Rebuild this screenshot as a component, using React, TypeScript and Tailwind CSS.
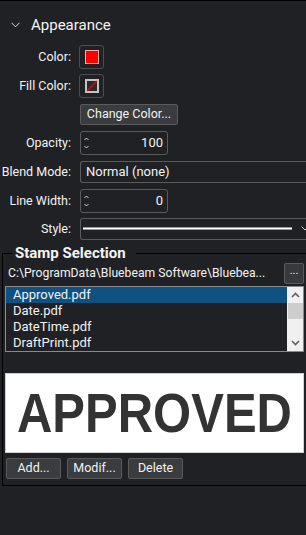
import React from "react";

const font = { fontFamily: "Roboto, 'Noto Sans', sans-serif" };

function Label({ children }: { children: React.ReactNode }) {
  return (
    <div className="flex w-[71px] shrink-0 justify-end whitespace-nowrap text-[12.5px] leading-[16px] text-[#f2f2f2]">
      {children}
    </div>
  );
}

function Spin({ value }: { value: string }) {
  return (
    <div className="ml-[9px] flex h-[24px] w-[88px] items-center rounded-[3px] border border-[#5a5a5a] pl-[3px] pr-[4px]">
      <div className="flex flex-col items-center justify-center gap-[4px]">
        <svg width="5" height="4" viewBox="0 0 5 4"><path d="M0.5 3 L2.5 1 L4.5 3" stroke="#cfcfcf" strokeWidth="1" fill="none" /></svg>
        <svg width="5" height="4" viewBox="0 0 5 4"><path d="M0.5 1 L2.5 3 L4.5 1" stroke="#cfcfcf" strokeWidth="1" fill="none" /></svg>
      </div>
      <div className="flex-1 text-right text-[13px] text-[#f2f2f2]">{value}</div>
    </div>
  );
}

function Btn({ children, w }: { children: React.ReactNode; w: string }) {
  return (
    <div className={`${w} flex h-[21px] items-center justify-center rounded-[2px] border border-[#5a5a5a] bg-[#3b3c3f] text-[12.5px] text-[#f2f2f2]`}>
      {children}
    </div>
  );
}

export default function App() {
  return (
    <div style={font} className="h-[535px] w-[306px] overflow-hidden border-t border-black bg-[#202124] text-[#f2f2f2]">
      {/* Header */}
      <div className="mt-[15px] flex h-[18px] items-center">
        <svg className="ml-[11px]" width="9" height="6" viewBox="0 0 9 6">
          <path d="M0.5 0.8 L4.5 4.8 L8.5 0.8" stroke="#e0e0e0" strokeWidth="1" fill="none" />
        </svg>
        <span className="ml-[11px] text-[15px] leading-[18px] text-[#f4f4f4]">Appearance</span>
      </div>

      {/* Color */}
      <div className="mt-[11px] flex items-center">
        <Label>Color:</Label>
        <div className="ml-[8px] flex h-[24px] w-[25px] items-center justify-center rounded-[3px] border border-[#4d4d4d]">
          <div className="h-[14px] w-[14px] border border-[#e6b0b0] bg-[#ff0000]" />
        </div>
      </div>

      {/* Fill color */}
      <div className="mt-[5px] flex items-center">
        <Label>Fill Color:</Label>
        <div className="ml-[8px] flex h-[24px] w-[25px] items-center justify-center rounded-[3px] border border-[#4d4d4d]">
          <svg width="14" height="14" viewBox="0 0 14 14">
            <rect x="1" y="1" width="12" height="12" fill="#2a2a2a" stroke="#c4c4c4" strokeWidth="2" />
            <path d="M2 12 L12 2" stroke="#ff0000" strokeWidth="1.3" />
          </svg>
        </div>
      </div>

      {/* Change color */}
      <div className="mt-[6px] flex">
        <div className="ml-[80px]">
          <Btn w="w-[98px]">Change Color...</Btn>
        </div>
      </div>

      {/* Opacity */}
      <div className="mt-[6px] flex items-center">
        <Label>Opacity:</Label>
        <Spin value="100" />
      </div>

      {/* Blend mode */}
      <div className="mt-[6px] flex items-center">
        <Label>Blend Mode:</Label>
        <div className="ml-[9px] flex h-[22px] flex-1 items-center rounded-l-[3px] border border-r-0 border-[#5a5a5a] pl-[5px] text-[13px] text-[#f2f2f2]">
          Normal (none)
        </div>
      </div>

      {/* Line width */}
      <div className="mt-[6px] flex items-center">
        <Label>Line Width:</Label>
        <Spin value="0" />
      </div>

      {/* Style */}
      <div className="mt-[5px] flex items-center">
        <Label>Style:</Label>
        <div className="ml-[9px] flex h-[22px] flex-1 items-center rounded-l-[3px] border border-r-0 border-[#5a5a5a] pb-[1px] pl-[2px]">
          <div className="h-[3px] w-[209px] border-y border-[#9a9a9a] bg-white" />
          <svg className="ml-[9px]" width="8" height="5" viewBox="0 0 8 5">
            <path d="M0.5 0.5 L4 4 L7.5 0.5" stroke="#cfcfcf" strokeWidth="1" fill="none" />
          </svg>
        </div>
      </div>

      {/* Stamp Selection group */}
      <fieldset className="ml-[2px] mt-[4px] w-[304px] border border-r-0 border-black pb-[6px]">
        <legend className="ml-[9px] pl-[3px] pr-[10px] text-[15px] font-bold leading-[18px] text-[#f4f4f4]">
          Stamp Selection
        </legend>

        <div className="flex h-[22px] items-center">
          <span className="ml-[5px] whitespace-nowrap text-[12.2px] text-[#f2f2f2]">
            C:\ProgramData\Bluebeam Software\Bluebea...
          </span>
          <div className="ml-auto mr-[2px] flex h-[21px] w-[20px] items-center justify-center rounded-[2px] border border-[#5a5a5a] bg-[#38393c] pb-[3px] text-[11px]">
            ...
          </div>
        </div>

        {/* List */}
        <div className="ml-[2px] mt-[2px] flex h-[66px] w-[299px] border border-[#8a8a8a]">
          <div className="flex-1 text-[13px] leading-[16px] text-[#f2f2f2]">
            <div className="h-[16px] bg-[#0f5180] pl-[7px]">Approved.pdf</div>
            <div className="h-[16px] pl-[7px]">Date.pdf</div>
            <div className="h-[16px] pl-[7px]">DateTime.pdf</div>
            <div className="h-[16px] pl-[7px]">DraftPrint.pdf</div>
          </div>
          <div className="flex w-[16px] flex-col items-center bg-[#f0f0f0]">
            <div className="flex h-[16px] items-center justify-center">
              <svg width="9" height="6" viewBox="0 0 9 6"><path d="M1 5 L4.5 1.5 L8 5" stroke="#606060" strokeWidth="1.6" fill="none" /></svg>
            </div>
            <div className="h-[16px] w-[15px] bg-[#cdcdcd]" />
            <div className="flex-1" />
            <div className="flex h-[16px] items-center justify-center">
              <svg width="9" height="6" viewBox="0 0 9 6"><path d="M1 1 L4.5 4.5 L8 1" stroke="#606060" strokeWidth="1.6" fill="none" /></svg>
            </div>
          </div>
        </div>

        {/* Preview */}
        <div className="ml-[2px] mt-[21px] flex h-[80px] w-[299px] items-center justify-center overflow-hidden border border-[#d0d0d0] bg-white">
          <span
            style={{ fontFamily: "'Liberation Sans', Arial, sans-serif" }}
            className="inline-block scale-y-[1.14] text-[49px] font-bold leading-none text-[#333333]"
          >
            APPROVED
          </span>
        </div>

        {/* Buttons */}
        <div className="ml-[3px] mt-[5px] flex gap-[6px]">
          <Btn w="w-[55px]">Add...</Btn>
          <Btn w="w-[55px]">Modif...</Btn>
          <Btn w="w-[55px]">Delete</Btn>
        </div>
      </fieldset>
    </div>
  );
}
